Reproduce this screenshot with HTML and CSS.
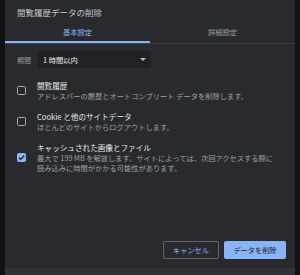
FILE: index.html
```html
<!DOCTYPE html>
<html lang="ja">
<head>
  <meta charset="UTF-8">
  <title>閲覧履歴データの削除</title>
  <link rel="stylesheet" href="styles.css">
</head>
<body>
  <div class="dialog">
    <div class="dialog-title">閲覧履歴データの削除</div>

    <div class="tabs">
      <div class="tab active">基本設定</div>
      <div class="tab">詳細設定</div>
    </div>

    <div class="period">
      <span class="period-label">期間</span>
      <div class="select">
        <span>1 時間以内</span>
        <svg class="arrow" width="6" height="3" viewBox="0 0 6 3"><path d="M0 0h6L3 3z" fill="#bdc1c6"/></svg>
      </div>
    </div>

    <div class="options">
      <div class="option">
        <span class="checkbox"></span>
        <div class="option-text">
          <div class="option-title">閲覧履歴</div>
          <div class="option-desc">アドレスバーの履歴とオートコンプリート データを削除します。</div>
        </div>
      </div>
      <div class="option">
        <span class="checkbox"></span>
        <div class="option-text">
          <div class="option-title">Cookie と他のサイトデータ</div>
          <div class="option-desc">ほとんどのサイトからログアウトします。</div>
        </div>
      </div>
      <div class="option">
        <span class="checkbox checked">
          <svg width="9" height="9" viewBox="0 0 9 9"><path d="M2 4.6l1.7 1.7L7.2 2.8" fill="none" stroke="#202124" stroke-width="1.3"/></svg>
        </span>
        <div class="option-text">
          <div class="option-title">キャッシュされた画像とファイル</div>
          <div class="option-desc">最大で 199 MB を解放します。サイトによっては、次回アクセスする際に<br>読み込みに時間がかかる可能性があります。</div>
        </div>
      </div>
    </div>

    <div class="actions">
      <button class="btn btn-cancel">キャンセル</button>
      <button class="btn btn-primary">データを削除</button>
    </div>

    <div class="footer"></div>
  </div>
</body>
</html>
```

FILE: styles.css
```css
:root {
  --bg: #292a2d;
  --dark: #202124;
  --blue: #8ab4f8;
  --text: #e8eaed;
  --muted: #9aa0a6;
}

* {
  box-sizing: border-box;
  margin: 0;
  padding: 0;
}

body {
  background-color: #111213;
  font-family: "Noto Sans CJK JP", "Noto Sans", sans-serif;
  width: 300px;
  height: 275px;
  overflow: hidden;
}

.dialog {
  margin-left: 5px;
  width: 290px;
  height: 275px;
  background-color: var(--bg);
  display: flex;
  flex-direction: column;
}

.dialog-title {
  color: #c4c7cc;
  font-size: 8.5px;
  line-height: 12px;
  padding: 6px 0 0 12px;
  height: 24px;
}

.tabs {
  display: flex;
  border-bottom: 1px solid #3c3d40;
  height: 20px;
}

.tab {
  flex: 1;
  text-align: center;
  font-size: 7.3px;
  line-height: 16px;
  color: var(--muted);
}

.tab.active {
  color: var(--blue);
  border-bottom: 2px solid var(--blue);
}

.period {
  display: flex;
  align-items: center;
  margin-top: 7px;
  padding-left: 12px;
}

.period-label {
  font-size: 7px;
  color: var(--muted);
  width: 21px;
}

.select {
  width: 113px;
  height: 17px;
  background-color: var(--dark);
  border-radius: 2px;
  display: flex;
  align-items: center;
  justify-content: space-between;
  padding: 0 5px 0 5px;
  font-size: 7.3px;
  color: var(--text);
}

.options {
  margin-top: 12px;
  display: flex;
  flex-direction: column;
  gap: 10px;
}

.option {
  display: flex;
  align-items: center;
  padding-left: 12px;
}

.checkbox {
  width: 9px;
  height: 9px;
  border: 1.3px solid #a8abb0;
  border-radius: 1.5px;
  margin-right: 11px;
  flex-shrink: 0;
  display: flex;
}

.checkbox.checked {
  background-color: var(--blue);
  border-color: var(--blue);
}

.checkbox.checked svg {
  margin: -1.3px;
}

.option-title {
  font-size: 7.6px;
  line-height: 11px;
  color: var(--text);
}

.option-desc {
  font-size: 7.25px;
  line-height: 10px;
  color: var(--muted);
}

.actions {
  margin-top: auto;
  display: flex;
  justify-content: flex-end;
  gap: 5px;
  padding-right: 9px;
  margin-bottom: 9px;
}

.btn {
  height: 18px;
  border-radius: 2px;
  font-family: inherit;
  font-size: 7.2px;
}

.btn-cancel {
  width: 56px;
  background: none;
  border: 1px solid #5f6368;
  color: var(--blue);
}

.btn-primary {
  width: 62px;
  background-color: var(--blue);
  border: none;
  color: var(--dark);
}

.footer {
  height: 7px;
  background-color: #313235;
}
```
